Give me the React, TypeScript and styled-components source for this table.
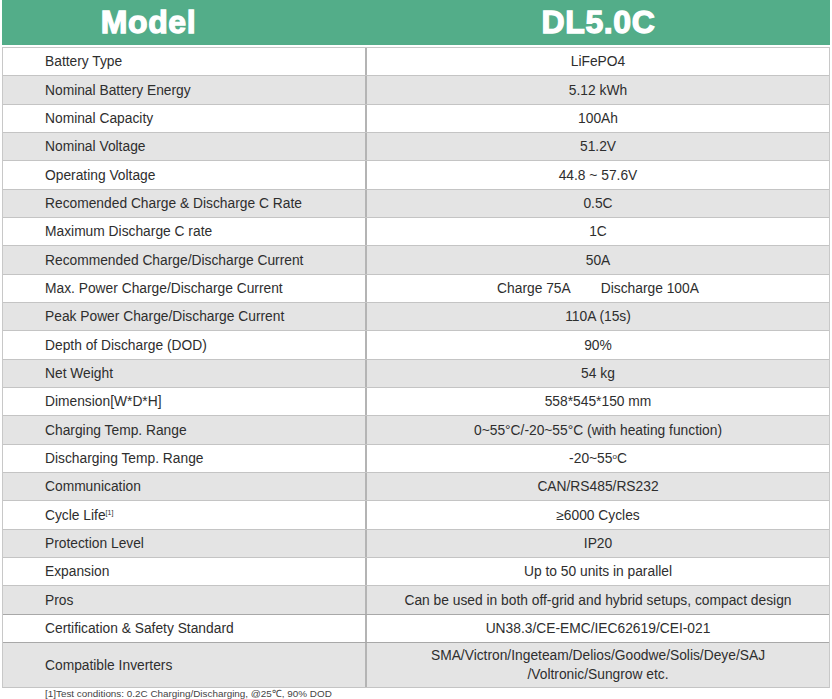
import React from "react";
import styled, { createGlobalStyle } from "styled-components";

const Global = createGlobalStyle`
  html, body { margin: 0; padding: 0; background: #ffffff; }
  body { font-family: "Liberation Sans", Arial, sans-serif; color: #333; }
`;

const Page = styled.div`
  width: 832px;
  padding: 0 2px 0 2px;
  box-sizing: border-box;
`;

const Header = styled.div`
  display: grid;
  grid-template-columns: 365px 1fr;
  height: 45px;
  background: #53ad89;
  color: #ffffff;
  font-family: "Liberation Sans", Arial, sans-serif;
  font-weight: 700;
  font-size: 32px;
  -webkit-text-stroke: 1.3px #ffffff;
  letter-spacing: 0.6px;
`;

const HeadCell = styled.div<{ $shift?: number }>`
  display: flex;
  align-items: center;
  justify-content: center;
  padding-right: ${(p) => p.$shift ?? 0}px;
`;

const Table = styled.div`
  margin-top: 2px;
  border-top: 1px solid #c8c8c8;
  border-left: 1px solid #c8c8c8;
  border-right: 1px solid #c8c8c8;
`;

const Row = styled.div<{ $alt: boolean; $h: number; $strong?: boolean }>`
  display: grid;
  grid-template-columns: 364px 1fr;
  height: ${(p) => p.$h}px;
  background: ${(p) => (p.$alt ? "#e4e4e4" : "#ffffff")};
  border-bottom: 1px solid ${(p) => (p.$strong ? "#a8a8a8" : "#c4c4c4")};
  box-sizing: border-box;
  font-size: 13.8px;
  color: #2e2e2e;
`;

const Label = styled.div`
  display: flex;
  align-items: center;
  padding-left: 42px;
  border-right: 2px solid #b4b4b4;
  white-space: nowrap;
`;

const Value = styled.div`
  display: flex;
  align-items: center;
  justify-content: center;
  text-align: center;
  line-height: 19px;
  white-space: nowrap;
`;

const Sup = styled.sup`
  font-size: 7px;
  line-height: 0;
  vertical-align: 5px;
`;

const Deg = styled.sup`
  font-size: 8px;
  line-height: 0;
  vertical-align: 4px;
`;

const Split = styled.span`
  display: inline-flex;
  gap: 30px;
`;

const Note = styled.div`
  padding-left: 43px;
  font-size: 9.9px;
  color: #444;
  line-height: 12px;
`;

type Spec = { label: React.ReactNode; value: React.ReactNode; h?: number; strong?: boolean };

const specs: Spec[] = [
  { label: "Battery Type", value: "LiFePO4" },
  { label: "Nominal Battery Energy", value: "5.12 kWh" },
  { label: "Nominal Capacity", value: "100Ah" },
  { label: "Nominal Voltage", value: "51.2V" },
  { label: "Operating Voltage", value: "44.8 ~ 57.6V" },
  { label: "Recomended Charge & Discharge C Rate", value: "0.5C" },
  { label: "Maximum Discharge C rate", value: "1C" },
  { label: "Recommended Charge/Discharge Current", value: "50A" },
  {
    label: "Max. Power Charge/Discharge Current",
    value: (
      <Split>
        <span>Charge 75A</span>
        <span>Discharge 100A</span>
      </Split>
    ),
  },
  { label: "Peak Power Charge/Discharge Current", value: "110A (15s)" },
  { label: "Depth of Discharge (DOD)", value: "90%" },
  { label: "Net Weight", value: "54 kg" },
  { label: "Dimension[W*D*H]", value: "558*545*150 mm" },
  { label: "Charging Temp. Range", value: "0~55°C/-20~55°C (with heating function)" },
  {
    label: "Discharging Temp. Range",
    value: (
      <span>
        -20~55<Deg>o</Deg>C
      </span>
    ),
  },
  { label: "Communication", value: "CAN/RS485/RS232" },
  {
    label: (
      <span>
        Cycle Life<Sup>[1]</Sup>
      </span>
    ),
    value: "≥6000 Cycles",
  },
  { label: "Protection Level", value: "IP20" },
  { label: "Expansion", value: "Up to 50 units in parallel" },
  { label: "Pros", value: "Can be used in both off-grid and hybrid setups, compact design", strong: true },
  { label: "Certification & Safety Standard", value: "UN38.3/CE-EMC/IEC62619/CEI-021", strong: true },
  {
    label: "Compatible Inverters",
    value: (
      <span>
        SMA/Victron/Ingeteam/Delios/Goodwe/Solis/Deye/SAJ
        <br />
        /Voltronic/Sungrow etc.
      </span>
    ),
    h: 45,
  },
];

export default function App() {
  const heights = [28, 29, 28];
  return (
    <Page>
      <Global />
      <Header>
        <HeadCell $shift={72}>Model</HeadCell>
        <HeadCell>DL5.0C</HeadCell>
      </Header>
      <Table>
        {specs.map((s, i) => (
          <Row key={i} $alt={i % 2 === 1} $h={s.h ?? heights[i % 3]} $strong={s.strong}>
            <Label>{s.label}</Label>
            <Value>{s.value}</Value>
          </Row>
        ))}
      </Table>
      <Note>[1]Test conditions: 0.2C Charging/Discharging, @25℃, 90% DOD</Note>
    </Page>
  );
}
